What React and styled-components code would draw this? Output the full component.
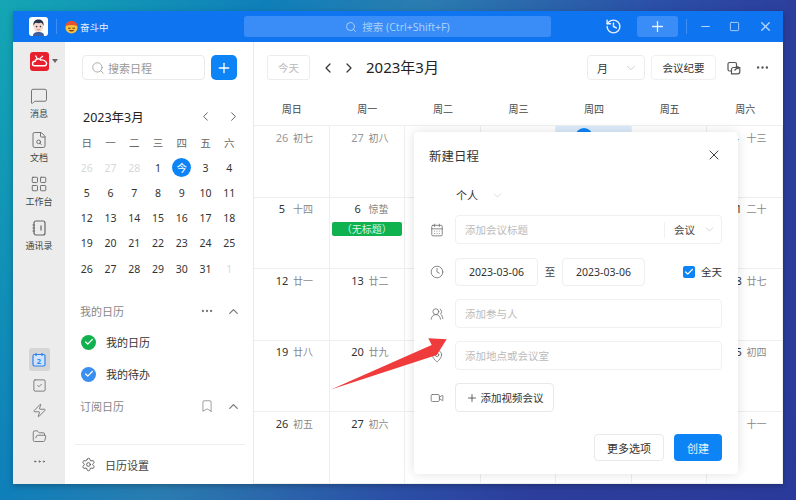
import React from 'react';
import styled, { createGlobalStyle } from 'styled-components';
import {
  MessageSquare,
  FileSearch,
  LayoutGrid,
  History,
  Plus,
  Minus,
  Square,
  X,
  Search,
  ChevronLeft,
  ChevronRight,
  ChevronDown,
  ChevronUp,
  Ellipsis,
  Check,
  Settings,
  Bookmark,
  CalendarDays,
  Clock,
  UsersRound,
  MapPin,
  Video,
  SquareCheck,
  Zap,
  FolderOpen,
} from 'lucide-react';

const GlobalStyle = createGlobalStyle`
  * { box-sizing: border-box; }
  html, body { margin: 0; padding: 0; }
  body {
    font-family: "Noto Sans", "Noto Sans CJK SC", sans-serif;
    color: #333;
  }
`;

const weekdays = ['周日', '周一', '周二', '周三', '周四', '周五', '周六'];
const miniHead = ['日', '一', '二', '三', '四', '五', '六'];
const miniDays = [
  26, 27, 28, 1, '今', 3, 4, 5, 6, 7, 8, 9, 10, 11, 12, 13, 14, 15, 16, 17, 18, 19, 20,
  21, 22, 23, 24, 25, 26, 27, 28, 29, 30, 31, 1,
];

// only what the dialog leaves visible: sun, mon and sat columns
const cells = [
  [26, '初七', true], [27, '初八', true], [], [], ['', '', false, true], [], [4, '十三'],
  [5, '十四'], [6, '惊蛰'], [], [], [], [], [11, '二十'],
  [12, '廿一'], [13, '廿二'], [], [], [], [], [18, '廿七'],
  [19, '廿八'], [20, '廿九'], [], [], [], [], [25, '初四'],
  [26, '初五'], [27, '初六'], [], [], [], [], [1, '十一'],
];

function AvatarFace() {
  return (
    <svg width="19" height="19" viewBox="0 0 19 19">
      <rect width="19" height="19" rx="3" fill="#fff" />
      <path d="M4 19c0-3 2-4 5.500-4S15 16 15 19z" fill="#3f5f9e" />
      <ellipse cx="9.500" cy="9.500" rx="4.800" ry="5.500" fill="#f6d7c8" />
      <path d="M4.500 9C3.800 4 6.500 2.500 9.500 2.500S15.200 4 14.500 9c-.6-2-1.500-3-2.500-3.200-1.500.6-3.500.6-5 0C6 6 5 7 4.500 9z" fill="#27324d" />
      <circle cx="7.600" cy="9.600" r=".8" fill="#27324d" />
      <circle cx="11.400" cy="9.600" r=".8" fill="#27324d" />
      <path d="M8.300 12.500c.7.500 1.700.500 2.400 0" stroke="#c4574c" strokeWidth=".7" fill="none" />
    </svg>
  );
}

function StatusEmoji() {
  return (
    <svg width="13" height="14" viewBox="0 0 13 14">
      <circle cx="6.500" cy="7.500" r="6" fill="#f7c23e" />
      <path d="M.6 6C1 2.500 3.500 1 6.500 1s5.500 1.500 5.900 5c-4-1.300-7.800-1.300-11.800 0z" fill="#e8502f" />
      <path d="M3 8.200h2.600M7.400 8.200H10" stroke="#6b3a12" strokeWidth="1" />
      <path d="M3.800 10c1.500 2 4 2 5.400 0z" fill="#8a3b12" />
    </svg>
  );
}

function CloudLogo() {
  return (
    <svg width="19" height="19" viewBox="0 0 19 19">
      <rect width="19" height="19" rx="3" fill="#e81f2d" />
      <path
        d="M2.500 12c0-1.700 1.300-2.700 2.600-2.700.5-1.700 1.700-2.600 3.100-2.600 1 0 1.900.5 2.500 1.300 2.300-.4 4.400.6 5.600 2.400.8 1.500-.1 3.400-1.900 3.400H4.800c-1.400 0-2.300-.9-2.300-1.800z"
        fill="none"
        stroke="#fff"
        strokeWidth="1.400"
      />
      <path d="M7 6.500 5.500 3.500M10 6.500l3-2.500" stroke="#fff" strokeWidth="1.300" />
    </svg>
  );
}

function ContactsIcon() {
  return (
    <svg width="18" height="18" viewBox="0 0 18 18" fill="none" stroke="currentColor" strokeWidth="1.200">
      <rect x="4" y="2" width="11" height="14" rx="2" />
      <path d="M2.500 6h2.500M2.500 9h2.500M2.500 12h2.500M11 6.500v5" />
    </svg>
  );
}

function TodayIcon() {
  return (
    <svg width="14" height="15" viewBox="0 0 14 15">
      <rect x="1" y="2.500" width="12" height="11.500" rx="1.500" fill="#cfe3fd" stroke="#2f80ed" strokeWidth="1.200" />
      <path d="M4 1v3M10 1v3" stroke="#2f80ed" strokeWidth="1.200" />
      <text x="7" y="11.800" fontSize="7.500" fontWeight="700" fill="#2f80ed" textAnchor="middle">2</text>
    </svg>
  );
}

function PopOutIcon() {
  return (
    <svg width="14" height="14" viewBox="0 0 14 14" fill="none" stroke="currentColor" strokeWidth="1.200">
      <rect x="1" y="1.500" width="8.500" height="8.500" rx="1.500" />
      <path d="M4.500 12.800h6.300a2 2 0 0 0 2-2V6.500H6.500a2 2 0 0 0-2 2z" fill="#fff" />
      <path d="M7.500 9.500l3.500-3.500M8.800 5.800H11.200V8.200" />
    </svg>
  );
}

export default function App() {
  return (
    <>
      <GlobalStyle />
      <Desktop>
        <Window>
          <TitleBar>
            <TitleLeft>
              <AvatarFace />
              <TitleDivider />
              <StatusEmoji />
              <StatusText>奋斗中</StatusText>
            </TitleLeft>
            <GlobalSearch>
              <Search size={12} />
              <span>搜索 (Ctrl+Shift+F)</span>
            </GlobalSearch>
            <TitleRight>
              <History size={17} strokeWidth={2} />
              <TitlePlus>
                <Plus size={17} strokeWidth={1.800} />
              </TitlePlus>
              <TitleDivider />
              <WinButtons>
                <Minus size={13} />
                <Square size={11} />
                <X size={15} />
              </WinButtons>
            </TitleRight>
          </TitleBar>

          <Body>
            <Rail>
              <LogoRow>
                <CloudLogo />
                <LogoCaret />
              </LogoRow>
              <RailItem>
                <MessageSquare size={18} strokeWidth={1.200} />
                <RailLabel>消息</RailLabel>
              </RailItem>
              <RailItem>
                <FileSearch size={18} strokeWidth={1.200} />
                <RailLabel>文档</RailLabel>
              </RailItem>
              <RailItem>
                <LayoutGrid size={18} strokeWidth={1.200} />
                <RailLabel>工作台</RailLabel>
              </RailItem>
              <RailItem>
                <ContactsIcon />
                <RailLabel>通讯录</RailLabel>
              </RailItem>
              <RailTools>
                <RailTool $active>
                  <TodayIcon />
                </RailTool>
                <RailTool>
                  <SquareCheck size={15} strokeWidth={1.300} />
                </RailTool>
                <RailTool>
                  <Zap size={15} strokeWidth={1.300} />
                </RailTool>
                <RailTool>
                  <FolderOpen size={15} strokeWidth={1.300} />
                </RailTool>
                <RailTool>
                  <Ellipsis size={15} strokeWidth={1.500} />
                </RailTool>
              </RailTools>
            </Rail>

            <SidePanel>
              <SearchRow>
                <SearchBox>
                  <Search size={14} strokeWidth={1.400} />
                  <span>搜索日程</span>
                </SearchBox>
                <AddButton>
                  <Plus size={16} strokeWidth={2} />
                </AddButton>
              </SearchRow>

              <MiniTitle>
                <span>2023年3月</span>
                <MiniNav>
                  <ChevronLeft size={15} strokeWidth={1.500} />
                  <ChevronRight size={15} strokeWidth={1.500} />
                </MiniNav>
              </MiniTitle>

              <MiniGrid>
                {miniHead.map((d) => (
                  <MiniCell key={d} $head>
                    {d}
                  </MiniCell>
                ))}
                {miniDays.map((d, i) => (
                  <MiniCell key={i} $dim={i < 3 || i === miniDays.length - 1}>
                    {d === '今' ? <TodayDot>今</TodayDot> : d}
                  </MiniCell>
                ))}
              </MiniGrid>

              <SectionHead $first>
                <span>我的日历</span>
                <SectionTools>
                  <Ellipsis size={14} />
                  <ChevronUp size={15} />
                </SectionTools>
              </SectionHead>
              <CalendarRow>
                <CalendarDot $color="#12b14f">
                  <Check size={10} strokeWidth={3} />
                </CalendarDot>
                我的日历
              </CalendarRow>
              <CalendarRow>
                <CalendarDot $color="#3a8ef0">
                  <Check size={10} strokeWidth={3} />
                </CalendarDot>
                我的待办
              </CalendarRow>
              <SectionHead>
                <span>订阅日历</span>
                <SectionTools>
                  <Bookmark size={14} strokeWidth={1.200} />
                  <ChevronUp size={15} />
                </SectionTools>
              </SectionHead>

              <PanelFooter>
                <Settings size={15} strokeWidth={1.300} />
                日历设置
              </PanelFooter>
            </SidePanel>

            <Main>
              <Toolbar>
                <TodayButton>今天</TodayButton>
                <MonthNav>
                  <ChevronLeft size={16} strokeWidth={1.800} />
                  <ChevronRight size={16} strokeWidth={1.800} />
                </MonthNav>
                <MonthTitle>2023年3月</MonthTitle>
                <ToolbarRight>
                  <ViewSelect>
                    月
                    <ChevronDown size={14} strokeWidth={1.200} />
                  </ViewSelect>
                  <NotesButton>会议纪要</NotesButton>
                  <ToolIcon>
                    <PopOutIcon />
                  </ToolIcon>
                  <ToolIcon>
                    <Ellipsis size={15} strokeWidth={1.800} />
                  </ToolIcon>
                </ToolbarRight>
              </Toolbar>

              <WeekRow>
                {weekdays.map((w) => (
                  <span key={w}>{w}</span>
                ))}
              </WeekRow>

              <MonthGrid>
                {cells.map(([num, lunar, dim, today], i) => (
                  <DayCell key={i} $today={today}>
                    {num !== undefined && (
                      <DayLine>
                        <DayNum $dim={dim} $today={today}>
                          {num}
                        </DayNum>
                        <Lunar>{lunar}</Lunar>
                      </DayLine>
                    )}
                    {i === 8 && <EventTag>（无标题）</EventTag>}
                  </DayCell>
                ))}
              </MonthGrid>
            </Main>
          </Body>

          <Dialog>
            <DialogHead>
              <span>新建日程</span>
              <X size={16} strokeWidth={1.400} />
            </DialogHead>

            <OwnerRow>
              个人
              <ChevronDown size={13} strokeWidth={1.200} />
            </OwnerRow>

            <FormRow>
              <FormIcon>
                <CalendarDays size={14} strokeWidth={1.300} />
              </FormIcon>
              <Field>
                <Placeholder>添加会议标题</Placeholder>
                <FieldType>
                  会议
                  <ChevronDown size={13} strokeWidth={1.200} />
                </FieldType>
              </Field>
            </FormRow>

            <FormRow>
              <FormIcon>
                <Clock size={14} strokeWidth={1.300} />
              </FormIcon>
              <DateBox>2023-03-06</DateBox>
              <DateSep>至</DateSep>
              <DateBox>2023-03-06</DateBox>
              <AllDay>
                <CheckBox>
                  <Check size={10} strokeWidth={3} />
                </CheckBox>
                全天
              </AllDay>
            </FormRow>

            <FormRow>
              <FormIcon>
                <UsersRound size={14} strokeWidth={1.300} />
              </FormIcon>
              <Field>
                <Placeholder>添加参与人</Placeholder>
              </Field>
            </FormRow>

            <FormRow>
              <FormIcon>
                <MapPin size={14} strokeWidth={1.300} />
              </FormIcon>
              <Field>
                <Placeholder>添加地点或会议室</Placeholder>
              </Field>
            </FormRow>

            <FormRow>
              <FormIcon>
                <Video size={14} strokeWidth={1.300} />
              </FormIcon>
              <VideoButton>
                <Plus size={12} strokeWidth={1.500} />
                添加视频会议
              </VideoButton>
            </FormRow>

            <DialogActions>
              <PlainButton>更多选项</PlainButton>
              <PrimaryButton>创建</PrimaryButton>
            </DialogActions>
          </Dialog>

          <PointerArrow width="120" height="56" viewBox="0 0 120 56">
            <polygon points="0,51.500 100.700,7 97.300,0.300 115.700,1.300 105.700,17" fill="#ef3b3b" />
          </PointerArrow>
        </Window>
      </Desktop>
    </>
  );
}

const Desktop = styled.div`
  width: 796px;
  height: 500px;
  overflow: hidden;
  padding: 11px 13px;
  background: linear-gradient(118deg, #14a6b4 0%, #0f7fb9 25%, #2a7cb0 40%, #2b4fa6 62%, #2c3e9c 75%, #2a3a9a 100%);
`;

const Window = styled.div`
  position: relative;
  width: 770px;
  height: 473px;
  display: flex;
  flex-direction: column;
  background: #fff;
  box-shadow: 0 2px 6px rgba(0, 0, 0, 0.25);
`;

const TitleBar = styled.header`
  height: 31px;
  flex: none;
  display: flex;
  align-items: center;
  background: #0f74f0;
  color: #fff;
`;

const TitleLeft = styled.div`
  width: 231px;
  flex: none;
  padding-left: 16px;
  display: flex;
  align-items: center;
`;

const TitleDivider = styled.i`
  width: 1px;
  height: 15px;
  margin: 0 8px;
  background: rgba(255, 255, 255, 0.2);
`;

const StatusText = styled.span`
  margin-left: 2px;
  font-size: 9.500px;
  color: #e8f2ff;
`;

const GlobalSearch = styled.div`
  width: 307px;
  height: 21px;
  flex: none;
  display: flex;
  align-items: center;
  justify-content: center;
  gap: 5px;
  border-radius: 3px;
  background: #3a8cf6;
  color: #a9d0fb;
  font-size: 10.500px;
`;

const TitleRight = styled.div`
  flex: 1;
  display: flex;
  align-items: center;
  padding-left: 53.500px;
  color: #e6f0ff;
`;

const TitlePlus = styled.div`
  width: 41px;
  height: 21px;
  margin-left: 15.500px;
  display: flex;
  align-items: center;
  justify-content: center;
  border-radius: 3px;
  background: #3a8cf6;
`;

const WinButtons = styled.div`
  width: 88px;
  flex: none;
  padding: 0 10.500px 0 3.500px;
  display: flex;
  align-items: center;
  justify-content: space-between;
  color: #b7d6fb;
`;

const Body = styled.div`
  flex: 1;
  min-height: 0;
  display: flex;
`;

const Rail = styled.nav`
  width: 52px;
  flex: none;
  display: flex;
  flex-direction: column;
  align-items: center;
  padding: 10px 0 11px;
  background: #ececec;
  color: #666;
`;

const LogoRow = styled.div`
  position: relative;
  width: 19px;
  height: 19px;
  margin-bottom: 16px;
`;

const LogoCaret = styled.i`
  position: absolute;
  left: 22px;
  top: 7px;
  border: 3px solid transparent;
  border-top: 4px solid #666;
`;

const RailItem = styled.div`
  height: 44px;
  display: flex;
  flex-direction: column;
  align-items: center;
  gap: 3px;
`;

const RailLabel = styled.span`
  font-size: 9px;
  line-height: 12px;
  color: #444;
`;

const RailTools = styled.div`
  margin-top: auto;
  display: flex;
  flex-direction: column;
  align-items: center;
  gap: 2.500px;
`;

const RailTool = styled.div`
  width: 21px;
  height: 23px;
  display: flex;
  align-items: center;
  justify-content: center;
  border-radius: 3px;
  background: ${(p) => (p.$active ? '#d5d5d5' : 'transparent')};
`;

const SidePanel = styled.aside`
  width: 189px;
  flex: none;
  display: flex;
  flex-direction: column;
  padding: 13px 8px 0 10px;
  border-right: 1px solid #e9e9e9;
`;

const SearchRow = styled.div`
  display: flex;
  gap: 6px;
  padding: 0 8px 0 7px;
`;

const SearchBox = styled.div`
  flex: 1;
  height: 25px;
  display: flex;
  align-items: center;
  gap: 3px;
  padding-left: 8px;
  border: 1px solid #eaeaea;
  border-radius: 4px;
  color: #999;
  font-size: 11px;
`;

const AddButton = styled.div`
  width: 26px;
  height: 25px;
  display: flex;
  align-items: center;
  justify-content: center;
  border-radius: 5px;
  background: #0d84f5;
  color: #fff;
`;

const MiniTitle = styled.div`
  height: 20px;
  margin-top: 26px;
  padding: 0 4px 0 8px;
  display: flex;
  align-items: center;
  justify-content: space-between;
  color: #222;
  font-size: 12.500px;
`;

const MiniNav = styled.div`
  display: flex;
  gap: 13px;
  color: #555;
`;

const MiniGrid = styled.div`
  margin-top: 4px;
  width: 166px;
  display: grid;
  grid-template-columns: repeat(7, 1fr);
  grid-auto-rows: 25.200px;
`;

const MiniCell = styled.div`
  display: flex;
  align-items: center;
  justify-content: center;
  font-size: 10.500px;
  color: ${(p) => (p.$head ? '#666' : p.$dim ? '#d8d8d8' : '#333')};
`;

const TodayDot = styled.span`
  width: 19px;
  height: 19px;
  display: flex;
  align-items: center;
  justify-content: center;
  border-radius: 50%;
  background: #0d84f5;
  color: #fff;
`;

const SectionHead = styled.div`
  height: 20px;
  margin-top: ${(p) => (p.$first ? '20px' : '6px')};
  padding: 0 4px 0 5px;
  display: flex;
  align-items: center;
  justify-content: space-between;
  color: #888;
  font-size: 11px;
`;

const SectionTools = styled.div`
  display: flex;
  align-items: center;
  gap: 12.500px;
  color: #777;
`;

const CalendarRow = styled.div`
  height: 32px;
  display: flex;
  align-items: center;
  gap: 10px;
  padding-left: 6px;
  color: #333;
  font-size: 11px;
  ${SectionHead} + & {
    margin-top: 5px;
  }
`;

const CalendarDot = styled.span`
  width: 15px;
  height: 15px;
  display: flex;
  align-items: center;
  justify-content: center;
  border-radius: 50%;
  background: ${(p) => p.$color};
  color: #fff;
`;

const PanelFooter = styled.div`
  margin-top: auto;
  height: 40px;
  display: flex;
  align-items: center;
  gap: 9px;
  padding-left: 6px;
  border-top: 1px solid #eeeeee;
  color: #444;
  font-size: 11px;
`;

const Main = styled.main`
  flex: 1;
  min-width: 0;
  display: flex;
  flex-direction: column;
`;

const Toolbar = styled.div`
  height: 50px;
  flex: none;
  padding: 13px 6px 0 13px;
  display: flex;
  align-items: flex-start;
`;

const TodayButton = styled.div`
  width: 43px;
  height: 25px;
  display: flex;
  align-items: center;
  justify-content: center;
  border: 1px solid #ececec;
  border-radius: 3px;
  color: #bbb;
  font-size: 10.500px;
`;

const MonthNav = styled.div`
  margin-left: 10px;
  height: 25px;
  display: flex;
  align-items: center;
  gap: 5px;
  color: #333;
`;

const MonthTitle = styled.div`
  margin-left: 9px;
  line-height: 25px;
  color: #222;
  font-size: 15px;
`;

const ToolbarRight = styled.div`
  margin-left: auto;
  height: 25px;
  display: flex;
  align-items: center;
`;

const ViewSelect = styled.div`
  width: 58px;
  height: 25px;
  padding: 0 6px 0 9px;
  display: flex;
  align-items: center;
  justify-content: space-between;
  border: 1px solid #ececec;
  border-radius: 4px;
  font-size: 11px;
  svg {
    color: #bbb;
  }
`;

const NotesButton = styled.div`
  width: 65px;
  height: 25px;
  margin-left: 6px;
  margin-right: 3px;
  display: flex;
  align-items: center;
  justify-content: center;
  border: 1px solid #f0f0f0;
  border-radius: 4px;
  font-size: 10.500px;
`;

const ToolIcon = styled.div`
  width: 29px;
  display: flex;
  justify-content: center;
  color: #555;
`;

const WeekRow = styled.div`
  height: 34px;
  flex: none;
  display: grid;
  grid-template-columns: repeat(7, 1fr);
  align-items: center;
  justify-items: center;
  border-bottom: 1px solid #eeeeee;
  color: #444;
  font-size: 10px;
`;

const MonthGrid = styled.div`
  flex: 1;
  min-height: 0;
  display: grid;
  grid-template-columns: repeat(7, 1fr);
  grid-template-rows: repeat(5, 1fr);
`;

const DayCell = styled.div`
  padding: 2px;
  border-right: 1px solid #eeeeee;
  border-bottom: 1px solid #eeeeee;
  background: ${(p) => (p.$today ? '#dcebfb' : '#fff')};
`;

const DayLine = styled.div`
  height: 18px;
  padding-left: 17px;
  display: flex;
  align-items: center;
`;

const DayNum = styled.span`
  width: 18px;
  height: 18px;
  display: flex;
  align-items: center;
  justify-content: center;
  border-radius: 50%;
  background: ${(p) => (p.$today ? '#0d84f5' : 'transparent')};
  color: ${(p) => (p.$today ? '#fff' : p.$dim ? '#999' : '#333')};
  font-size: 11px;
`;

const Lunar = styled.span`
  margin-left: 2px;
  color: #888;
  font-size: 10px;
`;

const EventTag = styled.div`
  height: 14px;
  margin-top: 4px;
  display: flex;
  align-items: center;
  justify-content: center;
  border-radius: 2px;
  background: #0fb24f;
  color: #d8f5e2;
  font-size: 10px;
`;

const Dialog = styled.section`
  position: absolute;
  left: 401px;
  top: 121px;
  width: 324px;
  height: 342px;
  padding: 13px 16px 0 15px;
  border-radius: 4px;
  background: #fff;
  box-shadow: 0 0 12px rgba(0, 0, 0, 0.12);
`;

const DialogHead = styled.div`
  height: 20px;
  display: flex;
  align-items: center;
  justify-content: space-between;
  color: #333;
  font-size: 12.500px;
`;

const OwnerRow = styled.div`
  height: 20px;
  margin-top: 20px;
  padding-left: 27px;
  display: flex;
  align-items: center;
  gap: 13px;
  color: #333;
  font-size: 11px;
  svg {
    color: #ccc;
  }
`;

const FormRow = styled.div`
  height: 29px;
  margin-top: 13px;
  display: flex;
  align-items: center;
  ${OwnerRow} + & {
    margin-top: 10px;
  }
`;

const FormIcon = styled.div`
  width: 26px;
  padding-left: 1px;
  flex: none;
  display: flex;
  color: #666;
`;

const Field = styled.div`
  flex: 1;
  height: 29px;
  display: flex;
  align-items: center;
  border: 1px solid #f0f0f0;
  border-radius: 4px;
  padding-left: 9px;
`;

const Placeholder = styled.span`
  flex: 1;
  color: #bbb;
  font-size: 10.500px;
`;

const FieldType = styled.div`
  width: 57px;
  height: 16px;
  padding: 0 5px 0 9px;
  display: flex;
  align-items: center;
  justify-content: space-between;
  border-left: 1px solid #f0f0f0;
  color: #444;
  font-size: 10.500px;
  svg {
    color: #bbb;
  }
`;

const DateBox = styled.div`
  width: 83px;
  height: 28px;
  display: flex;
  align-items: center;
  justify-content: center;
  border: 1px solid #eeeeee;
  border-radius: 4px;
  color: #333;
  font-size: 10.500px;
`;

const DateSep = styled.span`
  width: 24px;
  text-align: center;
  color: #444;
  font-size: 10.500px;
`;

const AllDay = styled.div`
  margin-left: auto;
  display: flex;
  align-items: center;
  gap: 6px;
  color: #333;
  font-size: 10.500px;
`;

const CheckBox = styled.span`
  width: 12px;
  height: 12px;
  display: flex;
  align-items: center;
  justify-content: center;
  border-radius: 2px;
  background: #0d84f5;
  color: #fff;
`;

const VideoButton = styled.div`
  width: 99px;
  height: 29px;
  display: flex;
  align-items: center;
  justify-content: center;
  gap: 3px;
  border: 1px solid #e9e9e9;
  border-radius: 4px;
  color: #333;
  font-size: 10.500px;
`;

const DialogActions = styled.div`
  margin-top: 22px;
  display: flex;
  justify-content: flex-end;
  gap: 10px;
`;

const PlainButton = styled.div`
  width: 70px;
  height: 27px;
  display: flex;
  align-items: center;
  justify-content: center;
  border: 1px solid #e9e9e9;
  border-radius: 4px;
  color: #333;
  font-size: 11px;
`;

const PrimaryButton = styled.div`
  width: 48px;
  height: 27px;
  display: flex;
  align-items: center;
  justify-content: center;
  border-radius: 4px;
  background: #0d84f5;
  color: #e4f2ff;
  font-size: 11px;
`;

const PointerArrow = styled.svg`
  position: absolute;
  left: 318px;
  top: 327px;
`;
